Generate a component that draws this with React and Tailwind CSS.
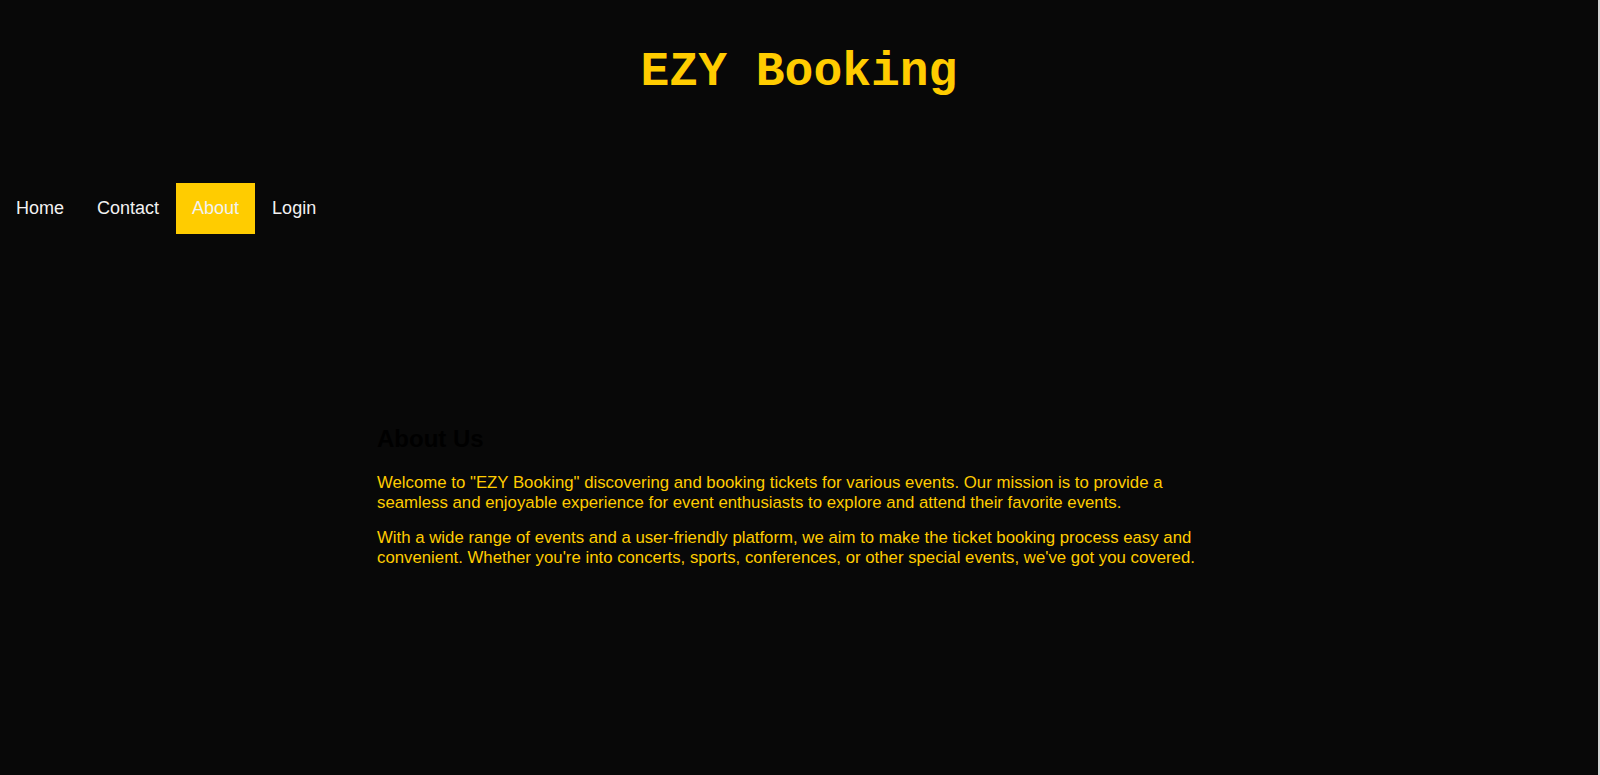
export default function App() {
  const items = ["Home", "Contact", "About", "Login"];
  return (
    <div className="flex h-[775px] w-full overflow-hidden">
      <div
        className="flex-1 bg-[#080808] flex flex-col"
        style={{ fontFamily: '"Liberation Sans", Arial, sans-serif' }}
      >
        <header className="pt-[45px] h-[183px]">
          <h1
            className="text-center text-[48px] font-bold leading-[54px] text-[#ffcc00]"
            style={{ fontFamily: '"Liberation Mono", "Courier New", monospace' }}
          >
            EZY Booking
          </h1>
        </header>
        <nav className="flex h-[51px]">
          {items.map((it) => (
            <a
              key={it}
              href="#"
              className={
                it === "About"
                  ? "flex items-center px-[16px] text-[18px] text-[#f2f2f2] bg-[#ffcc00] mr-[1px]"
                  : "flex items-center px-[16px] text-[18px] text-[#f2f2f2] mr-[1px]"
              }
            >
              {it}
            </a>
          ))}
        </nav>
        <main className="mx-auto w-[844px] pt-[191px]">
          <h2 className="text-[24px] font-bold leading-[27px] text-black mb-[21px]">
            About Us
          </h2>
          <p className="text-[16.8px] leading-[19.5px] text-[#ffcc00] mb-[16px]">
            Welcome to "EZY Booking" discovering and booking tickets for various events. Our mission is to provide a seamless and enjoyable experience for event enthusiasts to explore and attend their favorite events.
          </p>
          <p className="text-[16.8px] leading-[19.5px] text-[#ffcc00]">
            With a wide range of events and a user-friendly platform, we aim to make the ticket booking process easy and convenient. Whether you're into concerts, sports, conferences, or other special events, we've got you covered.
          </p>
        </main>
      </div>
      <div className="w-[2px] bg-[#d4d4d4]" />
    </div>
  );
}
